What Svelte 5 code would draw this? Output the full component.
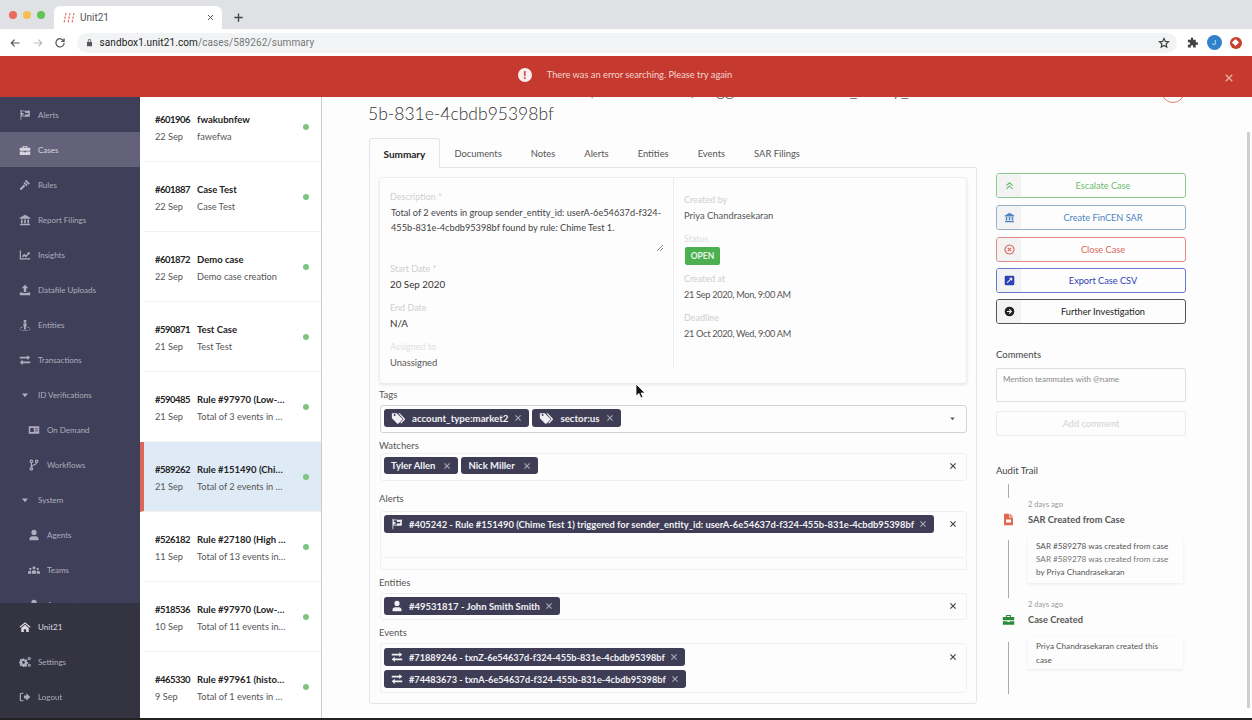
<script>
  const paths = {
    flag: "M2 1h1v1.2C6 1 9 3.4 14.5 2v8C9 11.4 6 9 3 10.2V15H2z M3.8 3v2.2L6 5.4V7.6L3.8 7.9v1.2L6 8.8 8 9V7l2.4.4 2-.3V5l-2 .4L8 5V3.4L6 3z",
    briefcase: "M1 5h14v4H1z M1 10h5.5v1h3v-1H15v4.5H1z M5 5V2.5h6V5H9.7V3.8H6.3V5z",
    gavel: "M9.5 1l5 5-1.6 1.6-5-5z M7.6 4l4 4-1.6 1.6-4-4z M6.4 7.2l2 2L3.6 14.4a1.4 1.4 0 0 1-2-2z",
    bank: "M8 1l7 4v1.4H1V5z M2.6 7.4h2.2v5H2.6z M6.9 7.4h2.2v5H6.9z M11.2 7.4h2.2v5h-2.2z M1.5 13h13v2h-13z",
    chart: "M1 2h1.6v10.4H15V14H1z M4 9.4l3-3 2 2 3-3-1-1h3.4v3.4l-1-1-4.4 4.4-2-2-2 2z",
    upload: "M8 1l4.5 4.6H9.6v5H6.4v-5H3.5z M1 11.2h4v.8h6v-.8h4V15H1z",
    person: "M6 3a2 2 0 1 0 4 0 2 2 0 1 0-4 0z M6 5.8h4v4.4H9.2V14H6.8v-3.8H6z M4.8 10.4v1C2.8 11.8 1 12.5 1 13.5 1 14.8 4 15.6 8 15.6s7-.8 7-2.1c0-1-1.8-1.7-3.8-2.1v-1C12.6 10.8 14 11.4 14 11.4V15H2v-3.6z",
    exchange: "M1 3.6h10V1.5l4 3.3-4 3.3V6H1z M15 9.9H5V7.8L1 11.1l4 3.4v-2.1h10z",
    caret: "M4 6h8l-4 5z",
    idcard: "M1 3h14v10H1z M3 5.2v5.6h4.6V5.2z M9 6v1h4.6V6z M9 8.8v1h4.6v-1z",
    user: "M4.5 4.5a3.5 3.5 0 1 0 7 0 3.5 3.5 0 1 0-7 0z M2 15v-2c0-2 1.6-3.4 3.6-3.4h4.8c2 0 3.6 1.4 3.6 3.4v2z",
    users: "M6 5a2 2 0 1 0 4 0 2 2 0 1 0-4 0z M5 13v-2c0-1.6 1-2.8 2.4-2.8h1.2C10 8.2 11 9.4 11 11v2z M1.6 6.6a1.5 1.5 0 1 0 3 0 1.5 1.5 0 1 0-3 0z M11.4 6.6a1.5 1.5 0 1 0 3 0 1.5 1.5 0 1 0-3 0z M0 13v-1.6C0 10 1 9 2.2 9h1.6C4.3 10 4 11 4 13z M16 13v-1.6C16 10 15 9 13.8 9h-1.6c-.5 1-.2 2-.2 4z",
    home: "M8 1.6l7.4 6.2-.9 1.1L8 3.5 1.5 8.9l-.9-1.1z M3 9.2l5-4.2 5 4.2V14.6H9.6v-3.6H6.4v3.6H3z",
    cogs: "M5 3.2h2l.3 1.4 1.2.5 1.2-.8 1.4 1.4-.8 1.2.5 1.2 1.4.3v2l-1.4.3-.5 1.2.8 1.2-1.4 1.4-1.2-.8-1.2.5L7 14.8H5l-.3-1.4-1.2-.5-1.2.8L.9 12.3l.8-1.2-.5-1.2L-.2 9.6v-2l1.4-.3.5-1.2-.8-1.2L2.3 3.5l1.2.8 1.2-.5z M4.2 8.6a1.8 1.8 0 1 0 3.6 0 1.8 1.8 0 1 0-3.6 0z M11.4 3.4a2.2 2.2 0 1 0 4.4 0 2.2 2.2 0 1 0-4.4 0z M12.8 3.4a.8.8 0 1 1 1.6 0 .8.8 0 1 1-1.6 0z M11.8 12.2a2 2 0 1 0 4 0 2 2 0 1 0-4 0z M13.1 12.2a.7.7 0 1 1 1.4 0 .7.7 0 1 1-1.4 0z",
    logout: "M6 2.2v1.6H3.4c-.5 0-.8.3-.8.8v6.8c0 .5.3.8.8.8H6v1.6H3.2C2 13.8 1 12.8 1 11.6V4.4C1 3.2 2 2.2 3.2 2.2z M6.6 6h3.2V3L15 8l-5.2 5v-3H6.6z",
    tags: "M1 2.5h5.6l6 6a1.2 1.2 0 0 1 0 1.7l-4 4a1.2 1.2 0 0 1-1.7 0L1 8.2z M3 4.6a1.1 1.1 0 1 0 2.2 0 1.1 1.1 0 1 0-2.2 0z M8.4 2.5h1.6l5.6 6a1.2 1.2 0 0 1 0 1.7l-4 4.2-1-1 3.6-4z",
    times: "M3.6 2L8 6.4 12.4 2 14 3.6 9.6 8l4.4 4.4-1.6 1.6L8 9.6 3.6 14 2 12.4 6.4 8 2 3.6z",
    square: "M3 1h10a2 2 0 0 1 2 2v10a2 2 0 0 1-2 2H3a2 2 0 0 1-2-2V3a2 2 0 0 1 2-2z M8 4v1.6h1.4L4 11l1 1 5.4-5.4V8H12V4z",
    circleright: "M8 1a7 7 0 1 0 0 14A7 7 0 0 0 8 1z M8 4.2l3.8 3.8L8 11.8l-1.1-1.1 1.9-1.9H4.2V7.2h4.6L6.9 5.3z",
    file: "M2.5 1H9v4.4h4.5V15h-11z M10 1l3.5 3.5H10z M5 8v3.6h6V8z",
    puzzle: "M6.5 2a1.5 1.5 0 0 1 3 0v1.5H13v3.5h1.5a1.7 1.7 0 0 1 0 3.4H13V14H9.6v-1.3a1.6 1.6 0 0 0-3.2 0V14H2.5v-3.8h1.3a1.6 1.6 0 0 0 0-3.2H2.5V3.5h4z",
    lock: "M3.5 7h9v7.5h-9z M5 7V4.8a3 3 0 0 1 6 0V7H9.6V4.8a1.6 1.6 0 0 0-3.2 0V7z",
    plus: "M7 2h2v5h5v2H9v5H7V9H2V7h5z",
  };

  const strokes = {
    branch: "M4.5 5v6 M11.5 5c0 3-7 2.5-7 6 M4.5 1.5a1.6 1.6 0 1 0 .01 0z M4.5 11.4a1.6 1.6 0 1 0 .01 0z M11.5 1.5a1.6 1.6 0 1 0 .01 0z",
    doubleup: "M3.5 8l4.5-4 4.5 4 M3.5 13l4.5-4 4.5 4",
    xcircle: "M8 1.5a6.5 6.5 0 1 0 .01 0z M5.5 5.5l5 5 M10.5 5.5l-5 5",
    back: "M14 8H3 M7.5 3.5L3 8l4.5 4.5",
    forward: "M2 8h11 M8.5 3.5L13 8l-4.5 4.5",
    reload: "M13 5.5A5.5 5.5 0 1 0 13.5 8 M13.5 2v4h-4",
    star: "M8 2l1.8 3.9 4.2.5-3.1 2.9.8 4.2L8 11.4l-3.7 2.1.8-4.2L2 6.4l4.2-.5z",
    close: "M3.5 3.5l9 9 M12.5 3.5l-9 9",
  };

  const nav = [
    { label: "Alerts", icon: "flag" },
    { label: "Cases", icon: "briefcase", active: true },
    { label: "Rules", icon: "gavel" },
    { label: "Report Filings", icon: "bank" },
    { label: "Insights", icon: "chart" },
    { label: "Datafile Uploads", icon: "upload" },
    { label: "Entities", icon: "person" },
    { label: "Transactions", icon: "exchange" },
    { label: "ID Verifications", icon: "caret" },
    { label: "On Demand", icon: "idcard", sub: true },
    { label: "Workflows", icon: "branch", sub: true },
    { label: "System", icon: "caret" },
    { label: "Agents", icon: "user", sub: true },
    { label: "Teams", icon: "users", sub: true },
    { label: "Account", icon: "user", sub: true },
  ];

  const cases = [
    { id: "#601906", name: "fwakubnfew", date: "22 Sep", desc: "fawefwa" },
    { id: "#601887", name: "Case Test", date: "22 Sep", desc: "Case Test" },
    { id: "#601872", name: "Demo case", date: "22 Sep", desc: "Demo case creation" },
    { id: "#590871", name: "Test Case", date: "21 Sep", desc: "Test Test" },
    { id: "#590485", name: "Rule #97970 (Low-risk country)", date: "21 Sep", desc: "Total of 3 events in group sender" },
    { id: "#589262", name: "Rule #151490 (Chime Test 1)", date: "21 Sep", desc: "Total of 2 events in group sender", selected: true },
    { id: "#526182", name: "Rule #27180 (High risk amount)", date: "11 Sep", desc: "Total of 13 events in group" },
    { id: "#518536", name: "Rule #97970 (Low-risk country)", date: "10 Sep", desc: "Total of 11 events in group" },
    { id: "#465330", name: "Rule #97961 (historic volume)", date: "9 Sep", desc: "Total of 1 events in group sender" },
  ];

  const tabs = ["Summary", "Documents", "Notes", "Alerts", "Entities", "Events", "SAR Filings"];

  const actions = [
    { label: "Escalate Case", icon: "doubleup", tone: "green" },
    { label: "Create FinCEN SAR", icon: "bank", tone: "blue" },
    { label: "Close Case", icon: "xcircle", tone: "red" },
    { label: "Export Case CSV", icon: "square", tone: "navy" },
    { label: "Further Investigation", icon: "circleright", tone: "black" },
  ];
</script>

{#snippet icon(name, size = 12)}
  <svg width={size} height={size} viewBox="0 0 16 16" fill="currentColor">
    {#if paths[name]}<path d={paths[name]} fill-rule="evenodd" />{/if}
    {#if strokes[name]}<path d={strokes[name]} fill="none" stroke="currentColor" stroke-width="1.6" />{/if}
  </svg>
{/snippet}

{#snippet chip(label, name, kind = "")}
  <span class="chip {kind}">
    {#if name}<span class="chip-icon">{@render icon(name, kind === "tag" ? 14 : 12)}</span>{/if}
    <span>{label}</span>
    <span class="chip-x">{@render icon("times", 8)}</span>
  </span>
{/snippet}

<div class="page">
  <div class="tabbar">
    <div class="lights"><i class="l1"></i><i class="l2"></i><i class="l3"></i></div>
    <div class="tab">
      <svg class="favicon" width="12" height="12" viewBox="0 0 12 12" fill="none" stroke="#e0766c" stroke-width="1.2" stroke-dasharray="2.5 1">
        <path d="M3 1L1 11 M7 1L5 11 M11 1L9 11" />
      </svg>
      <span class="tab-title">Unit21</span>
      <span class="tab-x">{@render icon("close", 9)}</span>
    </div>
    <span class="newtab">{@render icon("plus", 11)}</span>
  </div>

  <div class="toolbar">
    <span class="tool">{@render icon("back", 12)}</span>
    <span class="tool dim">{@render icon("forward", 12)}</span>
    <span class="tool">{@render icon("reload", 12)}</span>
    <div class="url">
      <span class="lock">{@render icon("lock", 9)}</span>
      <span class="host">sandbox1.unit21.com</span><span class="urlpath">/cases/589262/summary</span>
      <span class="star">{@render icon("star", 12)}</span>
    </div>
    <span class="ext">{@render icon("puzzle", 12)}</span>
    <span class="avatar">J</span>
    <span class="reddot"><i></i></span>
  </div>

  <div class="banner">
    <div class="banner-msg">
      <span class="bang">!</span>
      <span>There was an error searching. Please try again</span>
    </div>
    <span class="banner-x">{@render icon("times", 10)}</span>
  </div>

  <div class="body">
    <nav class="sidebar">
      <div class="nav-scroll">
        {#each nav as item}
          <div class="nav-item" class:active={item.active} class:sub={item.sub}>
            <span class="nav-icon">{@render icon(item.icon, 12)}</span>
            <span>{item.label}</span>
          </div>
        {/each}
      </div>
      <div class="nav-foot">
        <div class="nav-item strong"><span class="nav-icon">{@render icon("home", 12)}</span><span>Unit21</span></div>
        <div class="nav-item"><span class="nav-icon">{@render icon("cogs", 12)}</span><span>Settings</span></div>
        <div class="nav-item"><span class="nav-icon">{@render icon("logout", 12)}</span><span>Logout</span></div>
      </div>
    </nav>

    <div class="case-list">
      {#each cases as c}
        <div class="case" class:selected={c.selected}>
          <div class="case-text">
            <div class="case-row bold"><span class="case-id">{c.id}</span><span class="case-name">{c.name}</span></div>
            <div class="case-row"><span class="case-id">{c.date}</span><span class="case-name">{c.desc}</span></div>
          </div>
          <i class="dot"></i>
        </div>
      {/each}
    </div>

    <main class="main">
      <div class="title-row">
        <h1>Case 589262 Rule #151490 (Chime Test 1) triggered for sender_entity_id: userA-6e54637d-f324-45<br />5b-831e-4cbdb95398bf</h1>
        <span class="ring"></span>
      </div>

      <div class="columns">
        <div class="left">
          <div class="tabs">
            {#each tabs as t, i}
              <span class="tab-link" class:on={i === 0}>{t}</span>
            {/each}
          </div>

          <div class="panel">
            <div class="card">
              <div class="card-left">
                <div class="label">Description *</div>
                <div class="desc">
                  Total of 2 events in group sender_entity_id: userA-6e54637d-f324-455b-831e-4cbdb95398bf found by rule: Chime Test 1.
                  <svg class="grip" width="7" height="7" viewBox="0 0 7 7" stroke="#888" fill="none"><path d="M1 7l6-6 M4 7l3-3" /></svg>
                </div>
                <div class="label">Start Date *</div>
                <div class="value dark">20 Sep 2020</div>
                <div class="label gap">End Date</div>
                <div class="value dark">N/A</div>
                <div class="label gap faint">Assigned to</div>
                <div class="value spaced">Unassigned</div>
              </div>
              <div class="card-right">
                <div class="label">Created by</div>
                <div class="value">Priya Chandrasekaran</div>
                <div class="label gap faint">Status</div>
                <div class="badge">OPEN</div>
                <div class="label after-badge">Created at</div>
                <div class="value date">21 Sep 2020, Mon, 9:00 AM</div>
                <div class="label gap">Deadline</div>
                <div class="value date">21 Oct 2020, Wed, 9:00 AM</div>
              </div>
            </div>

            <div class="f-label tags-l">Tags</div>
            <div class="box strong-box tags-b">
              <div class="chips">
                {@render chip("account_type:market2", "tags", "tag")}
                {@render chip("sector:us", "tags", "tag")}
              </div>
              <span class="box-caret">{@render icon("caret", 9)}</span>
            </div>

            <div class="f-label watchers-l">Watchers</div>
            <div class="box watchers-b">
              <div class="chips">
                {@render chip("Tyler Allen", "", "person")}
                {@render chip("Nick Miller", "", "person")}
              </div>
              <span class="box-x">{@render icon("times", 8)}</span>
            </div>

            <div class="f-label alerts-l">Alerts</div>
            <div class="box alerts-b">
              <div class="chips">
                {@render chip("#405242 - Rule #151490 (Chime Test 1) triggered for sender_entity_id: userA-6e54637d-f324-455b-831e-4cbdb95398bf", "flag", "long")}
              </div>
              <span class="box-x">{@render icon("times", 8)}</span>
            </div>
            <div class="sliver"></div>

            <div class="f-label entities-l">Entities</div>
            <div class="box entities-b">
              <div class="chips">
                {@render chip("#49531817 - John Smith Smith", "user")}
              </div>
              <span class="box-x">{@render icon("times", 8)}</span>
            </div>

            <div class="f-label events-l">Events</div>
            <div class="box events-b">
              <div class="chips stack">
                {@render chip("#71889246 - txnZ-6e54637d-f324-455b-831e-4cbdb95398bf", "exchange", "event")}
                {@render chip("#74483673 - txnA-6e54637d-f324-455b-831e-4cbdb95398bf", "exchange", "event")}
              </div>
              <span class="box-x">{@render icon("times", 8)}</span>
            </div>
          </div>
        </div>

        <aside class="right">
          <div class="actions">
            {#each actions as a}
              <div class="action {a.tone}">
                <span class="action-icon">{@render icon(a.icon, 11)}</span>
                <span class="action-text">{a.label}</span>
              </div>
            {/each}
          </div>

          <div class="r-label comments">Comments</div>
          <div class="comment-input">Mention teammates with @name</div>
          <div class="comment-btn">Add comment</div>

          <div class="r-label audit">Audit Trail</div>
          <div class="trail">
            <div class="t-row first"><span class="rail"><i class="line l14"></i></span></div>
            <div class="t-row meta"><span class="rail"></span><span class="ago">2 days ago</span></div>
            <div class="t-row head">
              <span class="rail red">{@render icon("file", 13)}</span>
              <span class="t-title">SAR Created from Case</span>
            </div>
            <div class="t-row detail d1">
              <span class="rail"><i class="line l58"></i></span>
              <div class="t-card">
                <div>SAR #589278 was created from case</div>
                <div class="ghost">SAR #589278 was created from case</div>
                <div>by Priya Chandrasekaran</div>
              </div>
            </div>
            <div class="t-row meta"><span class="rail"></span><span class="ago">2 days ago</span></div>
            <div class="t-row head">
              <span class="rail green">{@render icon("briefcase", 13)}</span>
              <span class="t-title">Case Created</span>
            </div>
            <div class="t-row detail d2">
              <span class="rail"><i class="line l52"></i></span>
              <div class="t-card">
                <div>Priya Chandrasekaran created this</div>
                <div>case</div>
              </div>
            </div>
          </div>
        </aside>
      </div>

      <span class="scrollbar"></span>
      <svg class="cursor" width="12" height="16" viewBox="0 0 12 16">
        <path d="M1 1v12l3-2.6L6 15l2-1-2-4h4z" fill="#111" stroke="#fff" stroke-width="0.8" />
      </svg>
    </main>
  </div>
  <div class="strip"></div>
</div>

<style>
  :global(body) {
    margin: 0;
    background: #fff;
  }

  .page {
    width: 1252px;
    height: 720px;
    overflow: hidden;
    display: flex;
    flex-direction: column;
    font-family: "Lato", "Noto Sans", sans-serif;
    font-size: 10.5px;
    color: #444;
    filter: blur(0.25px);
  }

  /* browser chrome */
  .tabbar {
    height: 29px;
    flex: none;
    background: #dfe1e5;
    display: flex;
    align-items: flex-end;
    font-family: "Roboto", sans-serif;
  }

  .lights {
    display: flex;
    gap: 6px;
    padding: 0 9px 10px 9px;
    align-self: flex-end;
  }

  .lights i {
    width: 8px;
    height: 8px;
    border-radius: 50%;
  }

  .l1 { background: #ec6a5e; }
  .l2 { background: #f4bf4f; }
  .l3 { background: #61c554; }

  .tab {
    width: 168px;
    height: 23px;
    box-sizing: border-box;
    background: #fff;
    border-radius: 6px 6px 0 0;
    display: flex;
    align-items: center;
    padding: 0 7px 0 9px;
    color: #555;
    font-size: 10px;
  }

  .favicon {
    margin-right: 5px;
  }

  .tab-title {
    flex: 1;
  }

  .tab-x {
    display: flex;
    color: #444;
  }

  .newtab {
    display: flex;
    align-self: center;
    margin: 5px 0 0 11px;
    color: #444;
  }

  .toolbar {
    height: 27px;
    flex: none;
    background: #fff;
    box-sizing: border-box;
    display: flex;
    align-items: center;
    padding-left: 9px;
    color: #555;
  }

  .tool {
    display: flex;
    width: 22.5px;
    color: #555;
  }

  .tool.dim {
    color: #bbb;
  }

  .url {
    margin-left: 0;
    width: 1100px;
    height: 20px;
    border-radius: 10px;
    background: #f1f3f4;
    display: flex;
    align-items: center;
    padding: 0 7px 0 8px;
    box-sizing: border-box;
    font-family: "Roboto", sans-serif;
    font-size: 10px;
    letter-spacing: 0.1px;
  }

  .lock {
    display: flex;
    margin-right: 6px;
    color: #555;
  }

  .host {
    color: #222;
  }

  .urlpath {
    color: #777;
  }

  .star {
    display: flex;
    margin-left: auto;
    color: #444;
  }

  .ext {
    display: flex;
    margin-left: 9px;
    color: #444;
  }

  .avatar {
    width: 15px;
    height: 15px;
    border-radius: 50%;
    background: #2f82c9;
    color: #dcecf8;
    font: 8px/15px "Roboto", sans-serif;
    text-align: center;
    margin-left: 9px;
  }

  .reddot {
    width: 12px;
    height: 12px;
    border-radius: 50%;
    background: #c8402d;
    margin-left: 8px;
    display: flex;
    align-items: center;
    justify-content: center;
  }

  .reddot i {
    width: 5px;
    height: 5px;
    background: #fff;
    transform: rotate(45deg);
  }

  /* error banner */
  .banner {
    height: 41px;
    flex: none;
    background: #c5392f;
    display: grid;
    grid-template-columns: 1fr auto 1fr;
    align-items: center;
    color: #f3d6d3;
    position: relative;
    z-index: 2;
  }

  .banner-msg {
    grid-column: 2;
    display: flex;
    align-items: center;
    gap: 15px;
    margin-top: -4px;
    margin-left: -2px;
    font-size: 9.3px;
  }

  .bang {
    width: 14px;
    height: 14px;
    border-radius: 50%;
    background: #fbeeee;
    color: #c5392f;
    font-weight: 900;
    font-size: 11px;
    line-height: 14px;
    text-align: center;
  }

  .banner-x {
    grid-column: 3;
    justify-self: end;
    display: flex;
    margin: 2px 18px 0 0;
    color: #eba9a3;
  }

  /* app body */
  .body {
    flex: 1;
    min-height: 0;
    display: flex;
  }

  .sidebar {
    width: 140px;
    flex: none;
    display: flex;
    flex-direction: column;
    background: #403f59;
    color: #aeadbd;
  }

  .nav-scroll {
    flex: 1;
    min-height: 0;
    overflow: hidden;
  }

  .nav-item {
    height: 35px;
    display: flex;
    align-items: center;
    padding-left: 19px;
    box-sizing: border-box;
    font-size: 8px;
  }

  .nav-icon {
    width: 19px;
    display: flex;
  }

  .nav-item.sub {
    padding-left: 28px;
  }

  .nav-item.active {
    background: #63627a;
    color: #d6d5de;
  }

  .nav-foot {
    height: 115px;
    flex: none;
    box-sizing: border-box;
    padding-top: 6px;
    background: #343342;
  }

  .nav-item.strong {
    color: #dcdce2;
  }

  /* case list */
  .case-list {
    width: 182px;
    flex: none;
    box-sizing: border-box;
    border-right: 1px solid #ccc;
    overflow: hidden;
  }

  .case {
    height: 70px;
    box-sizing: border-box;
    margin-left: 4px;
    padding: 0 12px 0 11px;
    display: flex;
    align-items: center;
    justify-content: space-between;
    border-bottom: 1px solid #f2f2f2;
    background: #fff;
  }

  .case:first-child {
    margin-top: -5px;
  }

  .case.selected {
    margin-left: 0;
    padding-left: 11px;
    border-left: 4px solid #d9685c;
    background: #deebf7;
  }

  .case-text {
    width: 135px;
    padding-top: 2px;
  }

  .case-row {
    display: flex;
    height: 17px;
    line-height: 17px;
    color: #555;
    font-size: 9.2px;
  }

  .case-row.bold {
    color: #222;
    font-weight: 700;
    font-size: 9.5px;
  }

  .case-row.bold .case-id {
    letter-spacing: -0.5px;
  }

  .case-id {
    width: 42px;
    flex: none;
  }

  .case-name {
    min-width: 0;
    flex: 1;
    white-space: nowrap;
    overflow: hidden;
    text-overflow: ellipsis;
    padding-right: 3px;
  }

  .dot {
    width: 6px;
    height: 6px;
    border-radius: 50%;
    background: #7ec582;
  }

  /* main area */
  .main {
    flex: 1;
    min-width: 0;
    position: relative;
    background: #fdfdfd;
    padding-left: 47px;
    overflow: hidden;
  }

  .title-row {
    margin-top: -19px;
    display: flex;
    justify-content: space-between;
    height: 47px;
  }

  h1 {
    margin: 0 0 0 -1px;
    font-size: 17.5px;
    line-height: 24px;
    font-weight: 300;
    color: #333;
    white-space: nowrap;
    width: 780px;
  }

  .ring {
    width: 22px;
    height: 22px;
    border: 1px solid #d9807a;
    border-radius: 50%;
    margin: 1px 67px 0 0;
  }

  .columns {
    display: flex;
    margin-top: 13px;
  }

  .left {
    width: 608px;
    flex: none;
  }

  .tabs {
    display: flex;
    height: 30px;
    box-sizing: border-box;
    margin-bottom: -1px;
    position: relative;
  }

  .tab-link {
    padding: 0 13.5px;
    line-height: 30px;
    color: #555;
    font-size: 9.4px;
    box-sizing: border-box;
    border: 1px solid transparent;
    border-bottom: 0;
  }

  .tab-link.on {
    border-color: #e4e4e4;
    background: #fdfdfd;
    color: #222;
    font-weight: 700;
    font-size: 10px;
    border-radius: 3px 3px 0 0;
  }

  .panel {
    height: 537px;
    box-sizing: border-box;
    border: 1px solid #e6e6e6;
    border-radius: 0 0 3px 3px;
    padding: 9px 9px 0;
  }

  .card {
    height: 206px;
    box-sizing: border-box;
    display: flex;
    border: 1px solid #eee;
    border-bottom: 0;
    border-radius: 3px;
    box-shadow: 0 2px 3px rgba(0, 0, 0, 0.09);
  }

  .card-left {
    width: 294px;
    box-sizing: border-box;
    padding: 12px 10px 0 10px;
    border-right: 1px solid #eee;
    height: 191px;
  }

  .card-right {
    flex: 1;
    padding: 15px 10px 0;
  }

  .label {
    height: 14px;
    line-height: 14px;
    color: #cfcfcf;
    font-size: 9px;
  }

  .label.faint {
    color: #e0e0e0;
  }

  .label.gap {
    margin-top: 9px;
  }

  .value {
    height: 15px;
    line-height: 15px;
    margin-top: 1px;
    color: #555;
    font-size: 9.4px;
  }

  .value.date {
    font-size: 9.2px;
    letter-spacing: -0.3px;
  }

  .value.dark {
    color: #333;
    font-size: 9.8px;
  }

  .value.spaced {
    margin-top: 1px;
  }

  .desc {
    position: relative;
    height: 57px;
    margin-top: 1px;
    padding: 0 0 0 1px;
    line-height: 15px;
    color: #444;
    font-size: 9.2px;
  }

  .grip {
    position: absolute;
    right: 0;
    bottom: 11px;
  }

  .badge {
    width: 35px;
    height: 18px;
    line-height: 18px;
    margin: 1px 0 0 1px;
    border-radius: 2px;
    background: #4caf50;
    color: #e9f6ea;
    text-align: center;
    font-weight: 700;
    font-size: 8.5px;
  }

  .label.after-badge {
    margin-top: 7px;
  }

  .f-label {
    height: 14px;
    line-height: 16px;
    color: #555;
    font-size: 9.5px;
  }

  .tags-l { margin-top: 4px; }
  .watchers-l { margin-top: 5px; }
  .alerts-l { margin-top: 10px; }
  .entities-l { margin-top: 5px; }
  .events-l { margin-top: 5px; }

  .box {
    margin-left: 1px;
    box-sizing: border-box;
    border: 1px solid #f0f0f0;
    border-radius: 3px;
    display: flex;
    justify-content: space-between;
    padding: 3px 9px 0 3px;
  }

  .strong-box {
    border-color: #d2d2d2;
  }

  .tags-b { height: 28px; margin-top: 4px; }
  .watchers-b { height: 28px; margin-top: 1px; }
  .alerts-b { height: 47px; margin-top: 6px; }
  .entities-b { height: 27px; margin-top: 4px; }
  .events-b { height: 50px; margin-top: 4px; padding-top: 4px; }

  .sliver {
    height: 12px;
    margin-left: 1px;
    box-sizing: border-box;
    border: 1px solid #f0f0f0;
    border-top: 0;
  }

  .chips {
    display: flex;
    gap: 3px;
  }

  .chips.stack {
    flex-direction: column;
    align-items: flex-start;
    gap: 4px;
  }

  .chip {
    height: 18px;
    display: inline-flex;
    align-items: center;
    padding: 0 7px;
    border-radius: 3px;
    background: #3f3d56;
    color: #f1f1f4;
    font-weight: 700;
    font-size: 9.5px;
    white-space: nowrap;
  }

  .chip.long {
    font-size: 9.4px;
  }

  .chip.event {
    font-size: 9.2px;
  }

  .chip-icon {
    display: flex;
    margin-right: 6px;
  }

  .chip-x {
    display: flex;
    margin-left: 5px;
    color: #a9a8b6;
  }

  .chip.tag .chip-icon {
    margin-right: 7px;
  }

  .chip.tag {
    font-size: 9.7px;
  }

  .chip.tag .chip-x {
    margin-left: 6px;
  }

  .chip.person {
    height: 17px;
  }

  .chip.person .chip-x {
    margin-left: 8px;
  }

  .box-x {
    display: flex;
    color: #444;
    margin-top: 5px;
  }

  .box-caret {
    display: flex;
    color: #555;
    margin-top: 5px;
  }

  /* right column */
  .right {
    width: 190px;
    margin-left: 19px;
    padding-top: 35px;
  }

  .actions {
    display: flex;
    flex-direction: column;
    gap: 6px;
  }

  .action {
    height: 25px;
    box-sizing: border-box;
    display: flex;
    border: 1px solid;
    border-radius: 3px;
    font-size: 9.2px;
    overflow: hidden;
  }

  .action:nth-child(2),
  .action:nth-child(3) {
    margin-top: 1px;
  }

  .action-icon {
    width: 24px;
    flex: none;
    background: #f3f3f3;
    display: flex;
    align-items: center;
    justify-content: center;
  }

  .action-text {
    flex: 1;
    text-align: center;
    line-height: 23px;
  }

  .green { color: #6cbb6f; border-color: #8ccb8e; }
  .blue { color: #4f85c4; border-color: #93aecb; }
  .red { color: #d8665e; border-color: #e08b84; }
  .navy { color: #2f40b5; border-color: #6a75cf; }
  .black { color: #222; border-color: #555; }

  .r-label {
    height: 14px;
    line-height: 16px;
    color: #444;
    font-size: 9.5px;
  }

  .comments {
    margin-top: 23px;
  }

  .comment-input {
    height: 34px;
    margin-top: 7px;
    box-sizing: border-box;
    border: 1px solid #ddd;
    border-radius: 2px;
    padding: 5px 6px;
    color: #888;
    font-size: 8px;
  }

  .comment-btn {
    height: 25px;
    margin-top: 9px;
    box-sizing: border-box;
    border: 1px solid #eaeaea;
    border-radius: 2px;
    color: #d2d2d2;
    line-height: 23px;
    text-align: center;
    font-size: 9.2px;
  }

  .audit {
    margin-top: 27px;
  }

  .trail {
    margin-top: 7px;
  }

  .t-row {
    display: flex;
  }

  .rail {
    width: 24px;
    margin-right: 8px;
    flex: none;
    display: flex;
    justify-content: center;
  }

  .rail.red { color: #e2674f; }
  .rail.green { color: #2e8b3a; }

  .line {
    width: 1px;
    background: #aaa;
  }

  .l14 { height: 14px; }
  .l58 { height: 58px; margin-top: 3px; }
  .l52 { height: 52px; margin-top: 5px; }

  .first { height: 14px; }

  .meta {
    height: 13px;
    align-items: center;
  }

  .ago {
    color: #999;
    font-size: 7.5px;
  }

  .head {
    height: 16px;
    align-items: center;
    margin-bottom: 10px;
  }

  .t-title {
    color: #555;
    font-weight: 700;
    font-size: 9.3px;
  }

  .detail.d1 { height: 61px; }

  .t-card {
    width: 155px;
    height: fit-content;
    box-sizing: border-box;
    padding: 2px 8px;
    color: #555;
    font-size: 8.2px;
    line-height: 14px;
    white-space: nowrap;
    box-shadow: 0 1px 3px rgba(0, 0, 0, 0.08);
  }

  .d1 .t-card {
    padding: 2px 8px 4px;
  }

  .ghost {
    height: 6px;
    margin: 3px 0;
    overflow: hidden;
    line-height: 6px;
    color: #777;
  }

  .scrollbar {
    position: absolute;
    right: 2px;
    top: 35px;
    width: 3px;
    height: 576px;
    background: #cfcfcf;
  }

  .cursor {
    position: absolute;
    left: 313px;
    top: 286px;
  }

  .strip {
    height: 2px;
    flex: none;
    background: #222;
  }
</style>
